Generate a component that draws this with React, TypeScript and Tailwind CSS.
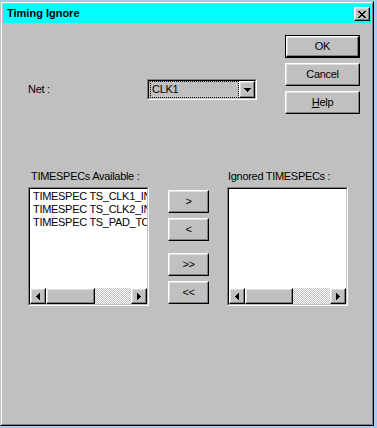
import React from "react";

const raised =
  "bg-[#c0c0c0] border border-t-white border-l-white border-r-black border-b-black shadow-[inset_-1px_-1px_0_#808080,inset_1px_1px_0_#dfdfdf]";

function Btn({ className = "", children }: { className?: string; children?: React.ReactNode }) {
  return (
    <div className={`${raised} flex items-center justify-center leading-none ${className}`}>
      {children}
    </div>
  );
}

function LeftArrow() {
  return (
    <svg width="4" height="7" viewBox="0 0 4 7" shapeRendering="crispEdges">
      <rect x="3" y="0" width="1" height="7" fill="#000" />
      <rect x="2" y="1" width="1" height="5" fill="#000" />
      <rect x="1" y="2" width="1" height="3" fill="#000" />
      <rect x="0" y="3" width="1" height="1" fill="#000" />
    </svg>
  );
}

function RightArrow() {
  return (
    <svg width="4" height="7" viewBox="0 0 4 7" shapeRendering="crispEdges">
      <rect x="0" y="0" width="1" height="7" fill="#000" />
      <rect x="1" y="1" width="1" height="5" fill="#000" />
      <rect x="2" y="2" width="1" height="3" fill="#000" />
      <rect x="3" y="3" width="1" height="1" fill="#000" />
    </svg>
  );
}

function DownArrow() {
  return (
    <svg width="7" height="4" viewBox="0 0 7 4" shapeRendering="crispEdges">
      <rect x="0" y="0" width="7" height="1" fill="#000" />
      <rect x="1" y="1" width="5" height="1" fill="#000" />
      <rect x="2" y="2" width="3" height="1" fill="#000" />
      <rect x="3" y="3" width="1" height="1" fill="#000" />
    </svg>
  );
}

function CloseGlyph() {
  const rows: [number, number][][] = [
    [[0, 2], [6, 2]],
    [[1, 2], [5, 2]],
    [[2, 4]],
    [[3, 2]],
    [[2, 4]],
    [[1, 2], [5, 2]],
    [[0, 2], [6, 2]],
  ];
  return (
    <svg width="8" height="7" viewBox="0 0 8 7" shapeRendering="crispEdges">
      {rows.map((segs, y) =>
        segs.map(([x, w], i) => <rect key={`${y}-${i}`} x={x} y={y} width={w} height="1" fill="#000" />)
      )}
    </svg>
  );
}

function ListBox({ items, thumb }: { items: string[]; thumb: string }) {
  return (
    <div className="w-[121px] h-[119px] border border-t-[#808080] border-l-[#808080] border-r-white border-b-white">
      <div className="h-full border border-t-black border-l-black border-r-[#c0c0c0] border-b-[#c0c0c0] bg-white flex flex-col">
        <div className="flex-1 overflow-hidden pl-[3px] pt-px">
          {items.map((t) => (
            <div key={t} className="h-[13px] leading-[13px] whitespace-nowrap text-black">
              {t}
            </div>
          ))}
        </div>
        <div className="h-[16px] flex">
          <Btn className="w-[16px] h-[16px] shrink-0">
            <LeftArrow />
          </Btn>
          <div className={`${raised} h-[16px] shrink-0 ${thumb}`} />
          <div className="flex-1 h-[16px] bg-[conic-gradient(#ffffff_25%,#c0c0c0_0_50%,#ffffff_0_75%,#c0c0c0_0)] bg-[length:2px_2px]" />
          <Btn className="w-[16px] h-[16px] shrink-0">
            <RightArrow />
          </Btn>
        </div>
      </div>
    </div>
  );
}

export default function App() {
  return (
    <div className="w-[377px] h-[428px] bg-[#a6caf0] pt-px overflow-hidden font-['Liberation_Sans',Arial,sans-serif] text-[11px] tracking-[-0.3px] text-black">
      <div className="w-[374px] h-[425px] border border-t-[#c0c0c0] border-l-[#c0c0c0] border-r-black border-b-black">
        <div className="h-full border border-t-white border-l-white border-r-[#808080] border-b-[#808080] bg-[#c0c0c0] p-px flex flex-col">
          {/* Title bar */}
          <div className="h-[19px] bg-[#00ffff] flex items-start justify-between pl-[4px] pr-[1px] shrink-0">
            <span className="font-bold text-[11px] leading-[19px] tracking-normal">Timing Ignore</span>
            <Btn className="mt-[3px] w-[16px] h-[14px]">
              <CloseGlyph />
            </Btn>
          </div>

          {/* Top row */}
          <div className="flex items-start">
            <div className="flex items-center mt-[56px] ml-[25px] h-[21px]">
              <span className="w-[119px]">Net :</span>
              <div className="w-[110px] h-[21px] border border-t-[#808080] border-l-[#808080] border-r-white border-b-white">
                <div className="h-full border border-t-black border-l-black border-r-[#c0c0c0] border-b-[#c0c0c0] bg-[#c0c0c0] flex">
                  <div className="flex-1 pl-px">
                    <div className="h-full border border-dotted border-black flex items-center pl-px leading-none">
                      CLK1
                    </div>
                  </div>
                  <Btn className="w-[16px] h-[17px] shrink-0">
                    <DownArrow />
                  </Btn>
                </div>
              </div>
            </div>
            <div className="ml-[28px] mt-[12px] flex flex-col gap-[5px] mb-[10px]">
              <div className="w-[75px] h-[23px] border border-black">
                <Btn className="w-full h-full">OK</Btn>
              </div>
              <Btn className="w-[75px] h-[23px]">Cancel</Btn>
              <Btn className="w-[75px] h-[23px]">
                <span>
                  <span className="underline underline-offset-1">H</span>elp
                </span>
              </Btn>
            </div>
          </div>

          {/* Middle row */}
          <div className="flex items-start ml-[25px] mt-[46px]">
            <div className="flex flex-col">
              <div className="h-[13px] leading-[13px] pl-[3px] whitespace-nowrap">TIMESPECs Available :</div>
              <div className="mt-[4px]">
                <ListBox
                  items={["TIMESPEC TS_CLK1_IN", "TIMESPEC TS_CLK2_IN", "TIMESPEC TS_PAD_TO_PAD"]}
                  thumb="w-[49px]"
                />
              </div>
            </div>
            <div className="ml-[19px] mt-[20px] flex flex-col">
              <Btn className="w-[41px] h-[23px]">&gt;</Btn>
              <Btn className="w-[41px] h-[23px] mt-[5px]">&lt;</Btn>
              <Btn className="w-[41px] h-[23px] mt-[12px]">&gt;&gt;</Btn>
              <Btn className="w-[41px] h-[23px] mt-[5px]">&lt;&lt;</Btn>
            </div>
            <div className="ml-[18px] flex flex-col">
              <div className="h-[13px] leading-[13px] pl-px whitespace-nowrap">Ignored TIMESPECs :</div>
              <div className="mt-[4px]">
                <ListBox items={[]} thumb="w-[48px]" />
              </div>
            </div>
          </div>
        </div>
      </div>
    </div>
  );
}
